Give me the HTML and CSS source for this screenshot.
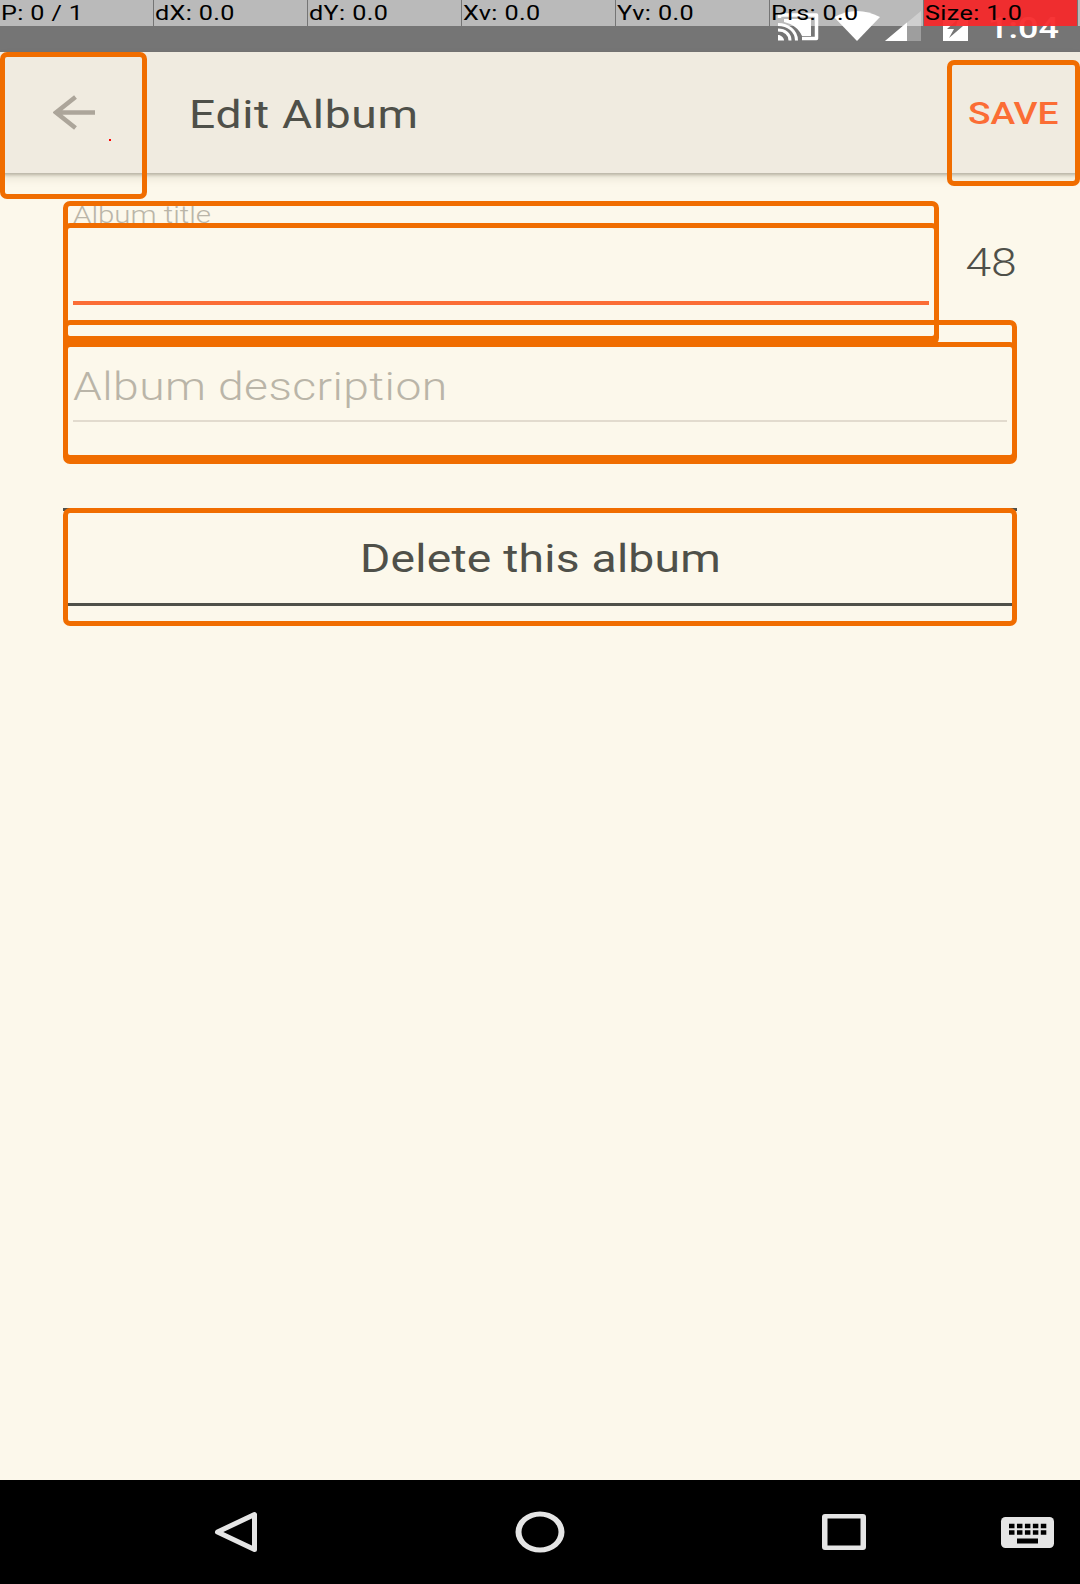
FILE: index.html
```html
<!DOCTYPE html>
<html lang="en">
<head>
<meta charset="utf-8">
<title>Edit Album</title>
<link rel="stylesheet" href="styles.css">
</head>
<body>
<div class="screen">
  <div class="status-bar">
    <svg class="status-icons" width="250" height="52" viewBox="770 0 250 52">
      <path d="M779.500 18V15H816.500V38.500H802" fill="none" stroke="#fff" stroke-width="3.500" stroke-linejoin="round"/>
      <path d="M784 19H811V36H802C799 29 793 24 784 22Z" fill="#fff"/>
      <path d="M778 35C781 35 784 37.500 784 40.500H778Z" fill="#fff"/>
      <path d="M778 30C785 30 790 34 790 40.500 M778 24.500C788 24.500 796.500 31 796.500 40.500" fill="none" stroke="#fff" stroke-width="3"/>
      <path d="M834 17Q857 5 880 17L857 41Z" fill="#fff"/>
      <path d="M885 41L921 11V41Z" fill="#fff" opacity=".3"/>
      <path d="M885 41L907 22.500V41Z" fill="#fff"/>
      <path d="M943 14H968V41H943Z" fill="#fff"/>
      <path d="M958 19L947 29H954L949 38L963 26H956Z" fill="#757575"/>
    </svg>
    <span class="clock stretch">1:04</span>
  </div>
  <header class="app-bar">
    <svg class="back" width="42" height="36" viewBox="0 0 42 36"><path d="M42 17.500H4M22.500 2L3 17.500L22.500 33" fill="none" stroke="#aca59a" stroke-width="4.500"/></svg>
    <h1 class="title stretch">Edit Album</h1>
    <span class="save stretch">SAVE</span>
  </header>
  <main class="form">
    <div class="title-row">
      <div class="title-field"><label class="label"><span class="stretch">Album title</span></label></div>
      <span class="counter stretch">48</span>
    </div>
    <div class="description"><span class="stretch">Album description</span></div>
    <div class="delete"><span class="stretch">Delete this album</span></div>
  </main>
  <nav class="nav-bar">
    <svg width="1080" height="104" viewBox="0 1480 1080 104" fill="none" stroke="#e5e5e5">
      <path d="M254.500 1514.500V1549.500L217.500 1532Z" stroke-width="5" stroke-linejoin="round"/>
      <path d="M515.500 1532a24.500 20.500 0 1 0 49 0a24.500 20.500 0 1 0-49 0ZM521.500 1532a18.500 15.500 0 1 1 37 0a18.500 15.500 0 1 1-37 0Z" fill="#e5e5e5" fill-rule="evenodd" stroke="none"/>
      <path d="M825 1514H863Q866 1514 866 1517V1547Q866 1550 863 1550H825Q822 1550 822 1547V1517Q822 1514 825 1514ZM827.500 1518.500V1545.500H860.500V1518.500Z" fill="#e5e5e5" fill-rule="evenodd" stroke="none"/>
      <rect x="1001" y="1517" width="53" height="31" rx="4.500" fill="#e5e5e5" stroke="none"/>
      <path d="M1009 1526H1047M1009 1532.500H1047" stroke="#000" stroke-width="4.500" stroke-dasharray="5.500 2.450"/>
      <path d="M1017 1541H1038" stroke="#000" stroke-width="5"/>
    </svg>
  </nav>

  <div class="outline outline-back"></div>
  <div class="outline outline-save"></div>
  <div class="outline outline-title"></div>
  <div class="outline outline-title-input"></div>
  <div class="outline outline-desc"></div>
  <div class="outline outline-desc-input"></div>
  <div class="outline outline-delete"></div>
  <div class="touch-dot"></div>

  <div class="pointer-bar">
    <div class="cell"><span class="stretch">P: 0 / 1</span></div>
    <div class="cell"><span class="stretch">dX: 0.0</span></div>
    <div class="cell"><span class="stretch">dY: 0.0</span></div>
    <div class="cell"><span class="stretch">Xv: 0.0</span></div>
    <div class="cell"><span class="stretch">Yv: 0.0</span></div>
    <div class="cell"><span class="stretch">Prs: 0.0</span></div>
    <div class="cell size"><span class="stretch">Size: 1.0</span></div>
    <div class="cell"></div>
  </div>
</div>
</body>
</html>
```

FILE: styles.css
```css
* { box-sizing: border-box; }
body { margin: 0; font-family: Roboto, "Liberation Sans", sans-serif; color: #4f5049; }

.screen {
  position: relative;
  width: 1080px;
  height: 1584px;
  display: flex;
  flex-direction: column;
  overflow: hidden;
  background: #fcf8eb;
}

.stretch {
  display: inline-block;
  white-space: nowrap;
  transform: scaleX(1.2);
  transform-origin: left center;
}

.status-bar { height: 52px; display: flex; padding-left: 770px; background: #757575; }
.status-icons { flex: none; margin-right: -32px; }
.clock { color: #fff; font-size: 30px; font-weight: 500; line-height: 35px; padding-top: 10px; }

.app-bar {
  height: 121px;
  display: flex;
  align-items: center;
  padding: 0 21px 0 53px;
  background: #f0ebe0;
  box-shadow: 0 2px 3px rgba(70, 65, 45, .3), 0 5px 9px rgba(70, 65, 45, .12);
}
.back { flex: none; }
.title { margin: 4px 0 0 94px; font-size: 38.5px; font-weight: 450; line-height: 46px; letter-spacing: .55px; }
.save { margin: 2px 0 0 auto; transform-origin: right center; color: #fb6d35; font-size: 31px; font-weight: 500; line-height: 38px; }

.form { flex: 1; padding: 28px 63px 0; }
.title-row { height: 119px; display: flex; justify-content: space-between; }
.title-field {
  width: 856px;
  height: 104px;
  margin-left: 10px;
  border-bottom: 4px solid #fb6d35;
}
.label { display: block; height: 24px; overflow: hidden; font-size: 24.500px; font-weight: 300; line-height: 28px; color: #bab5a8; }
.counter { transform-origin: right center; margin-top: 39px; font-size: 38.5px; font-weight: 300; line-height: 46px; }
.description {
  height: 102px;
  margin: 0 10px;
  padding-top: 44px;
  border-bottom: 2px solid #e2dbce;
  font-size: 38.5px;
  font-weight: 300;
  line-height: 46px;
  letter-spacing: .35px;
  color: #bab5a8;
}
.delete {
  height: 98px;
  margin-top: 86px;
  padding-top: 2px;
  display: flex;
  justify-content: center;
  align-items: center;
  border-top: 3px solid #4f5049;
  border-bottom: 3px solid #4f5049;
  font-size: 38.5px;
  font-weight: 450;
  letter-spacing: .2px;
}
.delete .stretch { transform-origin: center; }

.nav-bar { height: 104px; background: #000; }
.nav-bar svg { display: block; }

/* Highlight frames laid over the interactive elements. */
.outline { position: absolute; border: 5px solid #f06d00; border-radius: 7px; }
.outline-back { left: 0; top: 52px; width: 147px; height: 147px; }
.outline-save { left: 947px; top: 60px; width: 133px; height: 126px; }
.outline-title { left: 63px; top: 201px; width: 876px; height: 144px; }
.outline-title-input { left: 63px; top: 223px; width: 876px; height: 118px; }
.outline-desc { left: 63px; top: 320px; width: 954px; height: 144px; }
.outline-desc-input { left: 63px; top: 342px; width: 954px; height: 118px; }
.outline-delete { left: 63px; top: 508px; width: 954px; height: 118px; }
.touch-dot { position: absolute; left: 109px; top: 139px; width: 2px; height: 2px; background: #f00; }

/* Pointer read-out over the status bar. */
.pointer-bar {
  position: absolute;
  left: 0;
  top: 0;
  width: 1080px;
  height: 26px;
  display: grid;
  grid-template-columns: repeat(7, 153px) 3px;
  gap: 1px;
  color: #000;
  font-size: 21px;
  line-height: 27px;
  letter-spacing: .3px;
}
.cell { height: 26px; background: rgba(255, 255, 255, .5); padding-left: 1px; }
.size { background: rgba(246, 40, 42, .94); }
```
